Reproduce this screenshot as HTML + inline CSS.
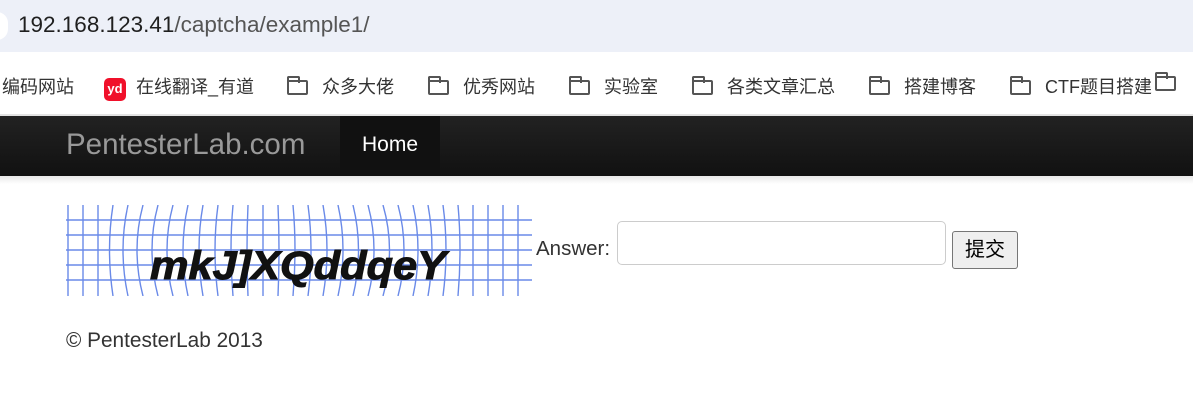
<!DOCTYPE html>
<html><head><meta charset="utf-8"><style>
body{margin:0;width:1193px;height:403px;overflow:hidden;background:#fff;font-family:"Liberation Sans","Noto Sans CJK SC",sans-serif;position:relative}
.addr{position:absolute;left:0;top:0;width:1193px;height:52px;background:#edf0f8}
.addr .c{position:absolute;left:-14px;top:12px;width:22px;height:28px;border-radius:14px;background:#fff}
.addr span{position:absolute;left:18px;top:12px;font-size:22.5px;color:#1f1f1f}
.addr span i{font-style:normal;color:#555}
.bm{position:absolute;top:52px;left:0;width:1193px;height:62px;background:#fff;border-bottom:2px solid #e3e3e3}
.bm div{position:absolute;top:21px;font-size:18px;color:#333;white-space:nowrap}
.fold{display:inline-block;width:21px;height:15px;border:2.5px solid #555;border-radius:2px;vertical-align:-2px;margin-right:14px;box-sizing:border-box;position:relative}
.fold:before{content:"";position:absolute;left:-2.5px;top:-6px;width:9px;height:5px;border:2.5px solid #555;border-bottom:none;border-radius:2px 2px 0 0}
.yd{display:inline-block;width:22px;height:23px;background:#f0102a;border-radius:5px;color:#fff;font-size:13px;font-weight:bold;text-align:center;line-height:22px;vertical-align:0;margin-right:10px}
.nav{position:absolute;top:116px;left:0;width:1193px;height:60px;background:linear-gradient(#222,#111)}
.brand{position:absolute;left:66px;top:12px;font-size:29.5px;color:#999}
.home{position:absolute;left:340px;top:0;width:100px;height:60px;background:#111;color:#fff;font-size:21px;text-align:center;line-height:58px}
.shadow{position:absolute;top:176px;left:0;width:1193px;height:8px;background:linear-gradient(#e8e8e8,#fff)}
.lbl{position:absolute;left:536px;top:237px;font-size:20.5px;color:#333}
.inp{position:absolute;left:617px;top:221px;width:329px;height:44px;box-sizing:border-box;border:1px solid #ccc;border-radius:5px}
.btn{position:absolute;left:952px;top:231px;width:66px;height:38px;box-sizing:border-box;border:1px solid #767676;border-radius:3px;background:#efefef;font-size:20px;text-align:center;line-height:36px;color:#000}
.foot{position:absolute;left:66px;top:329px;font-size:20.8px;color:#333}
</style></head><body>
<div class="addr"><div class="c"></div><span>192.168.123.41<i>/captcha/example1/</i></span></div>
<div class="bm">
<div style="left:2px">编码网站</div>
<div style="left:104px"><span class="yd">yd</span>在线翻译_有道</div>
<div style="left:287px"><span class="fold"></span>众多大佬</div>
<div style="left:428px"><span class="fold"></span>优秀网站</div>
<div style="left:569px"><span class="fold"></span>实验室</div>
<div style="left:692px"><span class="fold"></span>各类文章汇总</div>
<div style="left:869px"><span class="fold"></span>搭建博客</div>
<div style="left:1010px"><span class="fold"></span>CTF题目搭建</div>
<div style="left:1155px"><span class="fold"></span></div>
</div>
<div class="nav"><div class="brand">PentesterLab.com</div><div class="home">Home</div></div>
<div class="shadow"></div>
<svg style="position:absolute;left:66px;top:205px" width="466" height="91" viewBox="0 0 466 91">
<g stroke="#6a8ae8" stroke-width="1.4" fill="none">
<path d="M0 15H466M0 30H466M0 45H466M0 60H466M0 75H466"/>
<path d="M2 0V91M17 0V91M32 0V91M47 0Q40 45 47 91M62 0Q52 45 62 91M77 0Q65 45 77 91M92 0Q80 45 92 91M107 0Q95 45 107 91M122 0Q112 45 122 91M137 0Q129 45 137 91M152 0Q146 45 152 91M167 0Q163 45 167 91M182 0Q180 45 182 91M197 0V91M212 0Q214 45 212 91M227 0Q231 45 227 91M242 0Q248 45 242 91M257 0Q265 45 257 91M272 0Q282 45 272 91M287 0Q298 45 287 91M302 0Q314 45 302 91M317 0Q330 45 317 91M332 0Q344 45 332 91M347 0Q357 45 347 91M362 0Q370 45 362 91M377 0Q383 45 377 91M392 0Q396 45 392 91M407 0V91M422 0V91M437 0V91M452 0V91"/>
</g>
<text x="84" y="74" font-family="Liberation Sans" font-weight="bold" font-style="italic" font-size="40" fill="#111" stroke="#111" stroke-width="1" textLength="296" lengthAdjust="spacingAndGlyphs">mkJ]XQddqeY</text>
</svg>
<div class="lbl">Answer:</div>
<div class="inp"></div>
<div class="btn">提交</div>
<div class="foot">© PentesterLab 2013</div>
</body></html>
